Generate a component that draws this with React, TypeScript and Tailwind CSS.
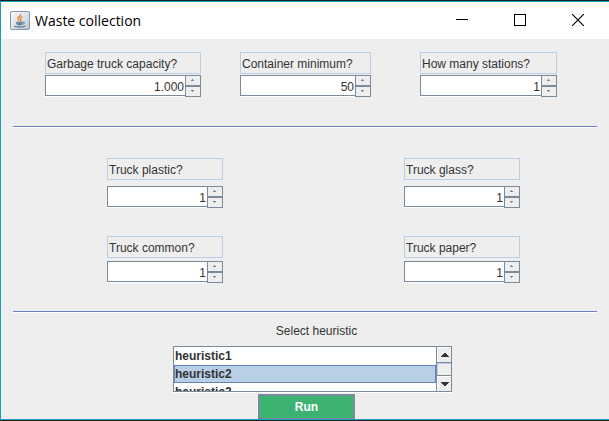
import { useState } from "react";

type FieldProps = { id: string; label: string; initial: string; gap: string; width: string };

function ArrowUp() {
  return (
    <svg className="h-[3px] w-1" viewBox="0 0 4 3" shapeRendering="crispEdges" aria-hidden="true">
      <path d="M1 0h1v1h1v1H0V1h1z" fill="#7a8a99" />
    </svg>
  );
}

function ArrowDown() {
  return (
    <svg className="h-[3px] w-1" viewBox="0 0 4 3" shapeRendering="crispEdges" aria-hidden="true">
      <path d="M0 0h3v1H2v1H1V1H0z" fill="#7a8a99" />
    </svg>
  );
}

function SpinnerField({ id, label, initial, gap, width }: FieldProps) {
  const [value, setValue] = useState(initial);
  const step = (by: number) => {
    const next = Number(value.replace(/\./g, "")) + by;
    setValue(String(next).replace(/\B(?=(\d{3})+$)/g, "."));
  };
  return (
    <div className={`flex flex-col ${gap} ${width}`}>
      <label htmlFor={id} className="h-[22px] border border-[#b8cfe5] px-px pt-px text-xs leading-5 whitespace-nowrap">
        {label}
      </label>
      <div className="flex h-[22px]">
        <div className="flex h-[22px] min-w-0 flex-1 border-b border-b-white">
          <input
            id={id}
            type="text"
            inputMode="numeric"
            value={value}
            onChange={(e) => setValue(e.target.value)}
            className="h-[21px] w-full min-w-0 border border-r-0 border-[#7a8a99] bg-white pt-[3px] pr-px text-right text-xs outline-none"
          />
        </div>
        <div className="flex w-4 flex-col">
          <button
            type="button"
            aria-label={`Increase ${label}`}
            onClick={() => step(1)}
            className="flex h-[11px] items-center justify-center border border-[#7a8a99]"
          >
            <ArrowUp />
          </button>
          <button
            type="button"
            aria-label={`Decrease ${label}`}
            onClick={() => step(-1)}
            className="flex h-[11px] items-center justify-center border border-[#7a8a99]"
          >
            <ArrowDown />
          </button>
        </div>
      </div>
    </div>
  );
}

function JavaIcon() {
  return (
    <svg className="h-5 w-5" viewBox="0 0 20 20" aria-hidden="true">
      <defs>
        <linearGradient id="tile" x1="0" y1="0" x2="1" y2="1">
          <stop offset="0" stopColor="#f7f8f9" />
          <stop offset="0.5" stopColor="#dfe4e9" />
          <stop offset="1" stopColor="#b9c4cf" />
        </linearGradient>
      </defs>
      <rect x="0.5" y="0.5" width="19" height="18" rx="1.5" fill="url(#tile)" stroke="#8795a5" />
      <path d="M10.600 3c1 1.600-3 2.500-2.600 4.500.2 1 1.200 1.700 1.200 2.900M12.300 5.600c-1.600.7-2.500 1.600-1.700 2.700.5.700.4 1.400-.2 2" fill="none" stroke="#e58a45" strokeWidth="1.500" />
      <path d="M5.800 10.800h7.400c0 1.800-.8 3.200-2 3.700H7.800c-1.200-.5-2-1.900-2-3.700z" fill="#6d8ba6" />
      <path d="M13 11.200c2.300-.6 2.300 1.600-.4 2" fill="none" stroke="#5c7c99" strokeWidth="0.900" />
      <path d="M4 15c2 1.500 9 1.500 11.300 0" fill="none" stroke="#5c7c99" strokeWidth="1.100" />
    </svg>
  );
}

function TitleBar() {
  const control = "flex h-full w-[58px] items-center justify-center";
  return (
    <header className="flex h-[37px] items-center bg-white pr-0.5 pl-[9px] text-black">
      <JavaIcon />
      <h1 className="ml-[5px] flex-1 font-['Open_Sans','Noto_Sans',sans-serif] text-sm leading-5">Waste collection</h1>
      <div className="flex h-full pb-px">
        <button type="button" aria-label="Minimize" className={control}>
          <svg className="h-3 w-3" viewBox="0 0 12 12" shapeRendering="crispEdges">
            <path d="M0 5h12v1H0z" />
          </svg>
        </button>
        <button type="button" aria-label="Maximize" className={control}>
          <svg className="h-3 w-3" viewBox="0 0 12 12" shapeRendering="crispEdges">
            <rect x="0.500" y="0.500" width="11" height="11" fill="none" stroke="black" />
          </svg>
        </button>
        <button type="button" aria-label="Close" className={control}>
          <svg className="h-3 w-3" viewBox="0 0 12 12">
            <path d="M0 0l12 12M12 0L0 12" fill="none" stroke="black" strokeWidth="1.100" />
          </svg>
        </button>
      </div>
    </header>
  );
}

function HeuristicList() {
  const [selected, setSelected] = useState("heuristic2");
  const option =
    "h-[18px] min-h-0 border border-transparent px-0 pt-px pb-0 text-xs leading-4 font-bold text-[#333333] checked:border-[#6382bf] checked:bg-[#b8cfe5] checked:bg-[linear-gradient(#b8cfe5,#b8cfe5)]";
  const bar = "flex items-center justify-center border-t border-l border-white";
  return (
    <div className="w-full border-b border-white">
      <div className="flex h-[46px] border border-[#7a8a99] bg-white">
        <select
          id="heuristic"
          size={3}
          value={selected}
          onChange={(e) => setSelected(e.target.value)}
          className="h-full min-w-0 flex-1 appearance-none overflow-hidden border-0 bg-white p-0 outline-none [scrollbar-width:none]"
        >
          <option className={option}>heuristic1</option>
          <option className={option}>heuristic2</option>
          <option className={option}>heuristic3</option>
        </select>
        <div className="flex w-[15px] flex-col border-l border-[#7a8a99] bg-[#eeeeee]">
          <button type="button" aria-label="Scroll up" className={`${bar} h-[15px]`}>
            <svg className="h-1 w-2" viewBox="0 0 8 4" shapeRendering="crispEdges">
              <path d="M3 0h2v1h1v1h1v1h1v1H0V3h1V2h1V1h1z" fill="#333333" />
            </svg>
          </button>
          <div className="h-[14px] border-y border-[#7a8a99]">
            <div className="h-full border-t border-l border-[#b8cfe5]" />
          </div>
          <button type="button" aria-label="Scroll down" className={`${bar} h-[15px]`}>
            <svg className="h-1 w-2" viewBox="0 0 8 4" shapeRendering="crispEdges">
              <path d="M0 0h8v1H7v1H6v1H5v1H3V3H2V2H1V1H0z" fill="#333333" />
            </svg>
          </button>
        </div>
      </div>
    </div>
  );
}

export default function App() {
  return (
    <div className="border-y border-[#1f2326] bg-[#eeeeee] font-['Liberation_Sans',Arial,sans-serif] text-[#333333]">
      <div className="border-y border-l border-[#1b9dbd]">
        <TitleBar />
        <main className="px-3 pt-[13px]">
          <section className="grid grid-cols-[195fr_180fr_137fr] pr-10 pl-8">
            <SpinnerField id="capacity" label="Garbage truck capacity?" initial="1.000" gap="gap-px" width="w-[156px]" />
            <SpinnerField id="minimum" label="Container minimum?" initial="50" gap="gap-px" width="w-[131px]" />
            <SpinnerField id="stations" label="How many stations?" initial="1" gap="gap-px" width="w-[137px]" />
          </section>
          <hr className="mt-[29px] h-[2px] border-t border-b border-t-[#6382bf] border-b-white" />
          <section className="mt-[30px] flex flex-col gap-7 pr-[77px] pl-[94px]">
            <div className="flex justify-between">
              <SpinnerField id="plastic" label="Truck plastic?" initial="1" gap="gap-[6px]" width="w-[116px]" />
              <SpinnerField id="glass" label="Truck glass?" initial="1" gap="gap-[6px]" width="w-[116px]" />
            </div>
            <div className="flex justify-between">
              <SpinnerField id="common" label="Truck common?" initial="1" gap="gap-[3px]" width="w-[116px]" />
              <SpinnerField id="paper" label="Truck paper?" initial="1" gap="gap-[3px]" width="w-[116px]" />
            </div>
          </section>
          <hr className="mt-7 h-[2px] border-t border-b border-t-[#6382bf] border-b-white" />
          <section className="flex flex-col items-center pt-2 pr-[145px] pl-40">
            <label htmlFor="heuristic" className="mb-[5px] pl-2 text-xs leading-5">
              Select heuristic
            </label>
            <HeuristicList />
          </section>
          <div className="flex justify-center pt-px pl-[3px]">
            <button
              type="button"
              className="h-[25px] w-[97px] border-2 border-b border-[#7a8a99] bg-[#3cb371] text-xs font-bold text-white"
            >
              Run
            </button>
          </div>
        </main>
      </div>
    </div>
  );
}
